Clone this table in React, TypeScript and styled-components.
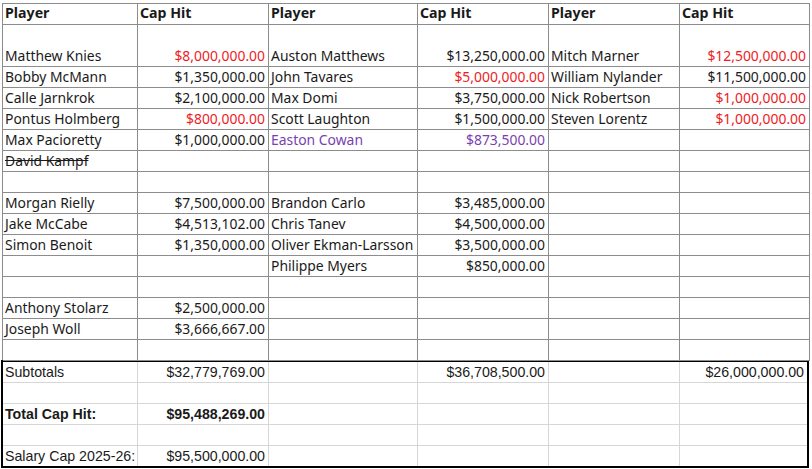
import React from 'react';
import styled, { createGlobalStyle } from 'styled-components';

const GlobalStyle = createGlobalStyle`
	html, body {
		margin: 0;
		padding: 0;
		background: #ffffff;
	}
`;

const RED = '#ee1c25';
const PURPLE = '#7a3fb0';

type Tone = 'red' | 'purple' | undefined;

interface CellData {
	text?: string;
	num?: boolean;
	tone?: Tone;
	strike?: boolean;
	bold?: boolean;
}

const Page = styled.div`
	padding: 3px 0 0 1px;
	width: 809px;
`;

const Upper = styled.div`
	display: grid;
	grid-template-columns: 135px 131px 149px 131px 131px 1fr;
	margin-left: 1px;
	border-left: 1px solid #8c8c8c;
	border-top: 1px solid #8c8c8c;
	font-family: 'Noto Sans', 'Open Sans', sans-serif;
	font-size: 13.9px;
	color: #1a1a1a;
`;

const Lower = styled.div`
	display: grid;
	grid-template-columns: 135px 131px 149px 131px 131px 1fr;
	border: 2px solid #000;
	margin-top: -1px;
	margin-right: 1px;
	font-family: 'Liberation Sans', Arial, sans-serif;
	font-size: 14.2px;
	color: #1a1a1a;
`;

const Cell = styled.div<{ $num?: boolean; $tone?: Tone; $strike?: boolean; $bold?: boolean; $tall?: boolean }>`
	box-sizing: border-box;
	height: ${(p) => (p.$tall ? 42 : 21)}px;
	border-right: 1px solid #8c8c8c;
	border-bottom: 1px solid #8c8c8c;
	display: flex;
	align-items: flex-end;
	justify-content: ${(p) => (p.$num ? 'flex-end' : 'flex-start')};
	padding: 0 3px 1px 2px;
	white-space: nowrap;
	overflow: visible;
	font-weight: ${(p) => (p.$bold ? 700 : 400)};
	text-decoration: ${(p) => (p.$strike ? 'line-through' : 'none')};
	color: ${(p) => (p.$tone === 'red' ? RED : p.$tone === 'purple' ? PURPLE : 'inherit')};
	line-height: 18px;
`;

const HeadCell = styled(Cell)`
	font-weight: 700;
	font-size: 14.2px;
	align-items: center;
	padding-bottom: 2px;
`;

const LowCell = styled(Cell)<{ $lastCol?: boolean; $lastRow?: boolean }>`
	border-right: ${(p) => (p.$lastCol ? 'none' : '1px solid #d6d6d6')};
	border-bottom: ${(p) => (p.$lastRow ? 'none' : '1px solid #d6d6d6')};
	height: ${(p) => (p.$lastRow ? 20 : 21)}px;
	padding-bottom: 2px;
	line-height: 16px;
`;

const n = (text: string, tone?: Tone): CellData => ({ text, num: true, tone });
const t = (text: string, tone?: Tone, strike?: boolean): CellData => ({ text, tone, strike });
const E: CellData = {};

const rows: CellData[][] = [
	[t('Matthew Knies'), n('$8,000,000.00', 'red'), t('Auston Matthews'), n('$13,250,000.00'), t('Mitch Marner'), n('$12,500,000.00', 'red')],
	[t('Bobby McMann'), n('$1,350,000.00'), t('John Tavares'), n('$5,000,000.00', 'red'), t('William Nylander'), n('$11,500,000.00')],
	[t('Calle Jarnkrok'), n('$2,100,000.00'), t('Max Domi'), n('$3,750,000.00'), t('Nick Robertson'), n('$1,000,000.00', 'red')],
	[t('Pontus Holmberg'), n('$800,000.00', 'red'), t('Scott Laughton'), n('$1,500,000.00'), t('Steven Lorentz'), n('$1,000,000.00', 'red')],
	[t('Max Pacioretty'), n('$1,000,000.00'), t('Easton Cowan', 'purple'), n('$873,500.00', 'purple'), E, E],
	[t('David Kampf', undefined, true), E, E, E, E, E],
	[E, E, E, E, E, E],
	[t('Morgan Rielly'), n('$7,500,000.00'), t('Brandon Carlo'), n('$3,485,000.00'), E, E],
	[t('Jake McCabe'), n('$4,513,102.00'), t('Chris Tanev'), n('$4,500,000.00'), E, E],
	[t('Simon Benoit'), n('$1,350,000.00'), t('Oliver Ekman-Larsson'), n('$3,500,000.00'), E, E],
	[E, E, t('Philippe Myers'), n('$850,000.00'), E, E],
	[E, E, E, E, E, E],
	[t('Anthony Stolarz'), n('$2,500,000.00'), E, E, E, E],
	[t('Joseph Woll'), n('$3,666,667.00'), E, E, E, E],
	[E, E, E, E, E, E],
];

const totals: CellData[][] = [
	[t('Subtotals'), n('$32,779,769.00'), E, n('$36,708,500.00'), E, n('$26,000,000.00')],
	[E, E, E, E, E, E],
	[{ text: 'Total Cap Hit:', bold: true }, { text: '$95,488,269.00', num: true, bold: true }, E, E, E, E],
	[E, E, E, E, E, E],
	[t('Salary Cap 2025-26:'), n('$95,500,000.00'), E, E, E, E],
];

const headers = ['Player', 'Cap Hit', 'Player', 'Cap Hit', 'Player', 'Cap Hit'];

export default function App() {
	return (
		<>
			<GlobalStyle />
			<Page>
				<Upper>
					{headers.map((h, i) => (
						<HeadCell key={`h${i}`}>{h}</HeadCell>
					))}
					{rows.map((row, r) =>
						row.map((c, i) => (
							<Cell
								key={`r${r}c${i}`}
								$tall={r === 0}
								$num={c.num}
								$tone={c.tone}
								$strike={c.strike}
								$bold={c.bold}
							>
								{c.text}
							</Cell>
						)),
					)}
				</Upper>
				<Lower>
					{totals.map((row, r) =>
						row.map((c, i) => (
							<LowCell
								key={`t${r}c${i}`}
								$num={c.num}
								$bold={c.bold}
								$lastCol={i === 5}
								$lastRow={r === totals.length - 1}
							>
								{c.text}
							</LowCell>
						)),
					)}
				</Lower>
			</Page>
		</>
	);
}
